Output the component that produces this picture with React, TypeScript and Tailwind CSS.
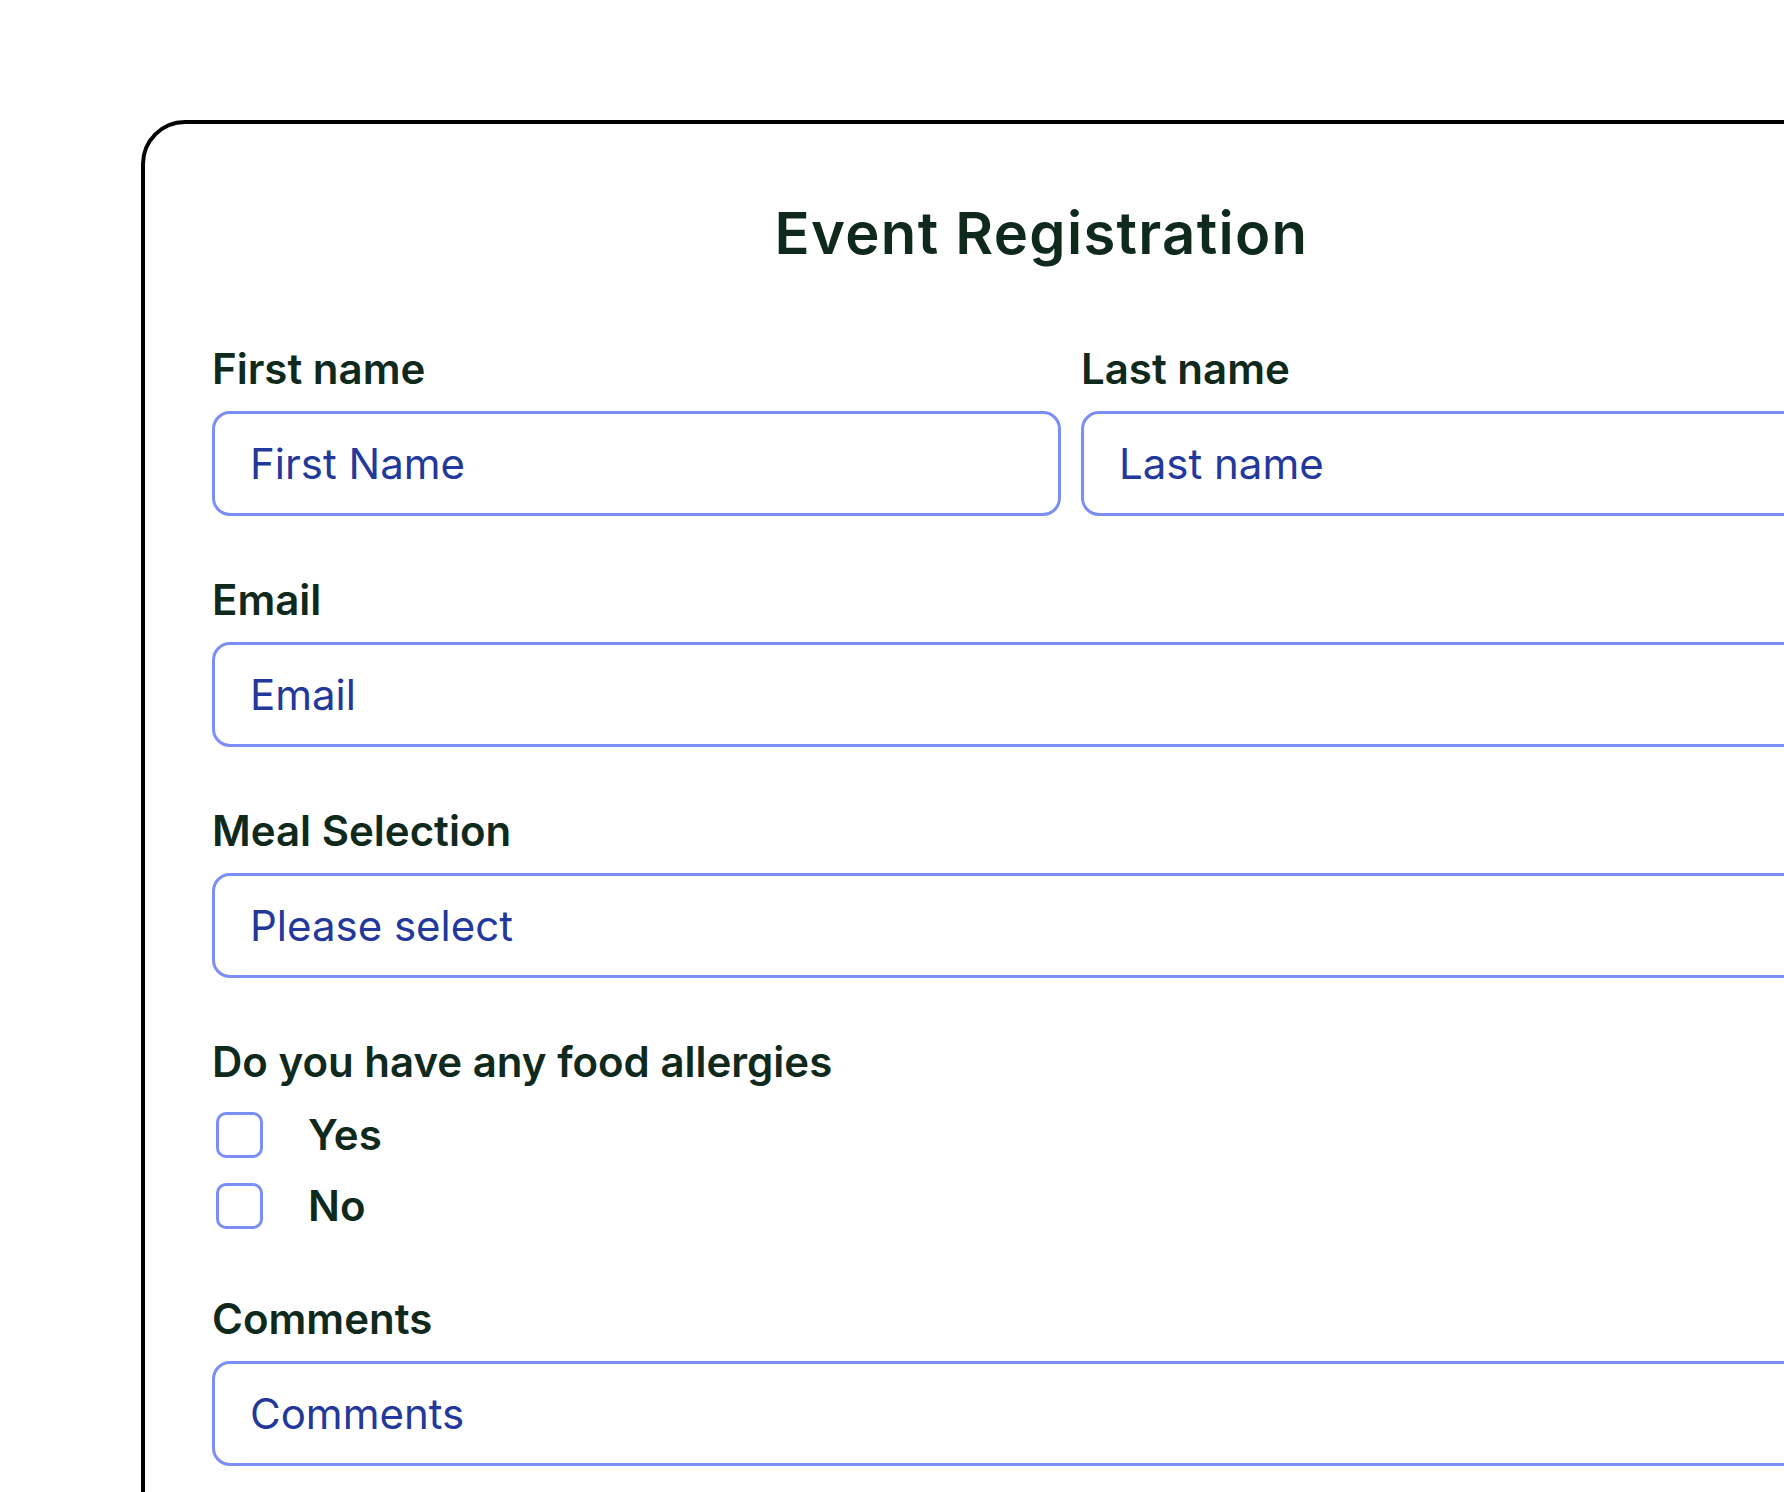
import React from "react";

const font = { fontFamily: "Inter, 'Noto Sans', sans-serif" };

function Field({ label, placeholder }: { label: string; placeholder: string }) {
  return (
    <div className="flex flex-col gap-[18px]">
      <div className="text-[42px] leading-[48px] font-semibold text-[#0f2a1d]">{label}</div>
      <div className="h-[105px] rounded-[18px] border-[3px] border-[#7b8ef7] flex items-center pl-[35px]">
        <span className="text-[42px] leading-[48px] font-normal text-[#23389b]">{placeholder}</span>
      </div>
    </div>
  );
}

function Check({ label }: { label: string }) {
  return (
    <div className="flex items-center h-[48px]">
      <div className="ml-[4px] w-[47px] h-[46px] rounded-[10px] border-[3px] border-[#7b8ef7]" />
      <span className="ml-[45px] text-[42px] leading-[48px] font-semibold text-[#0f2a1d]">{label}</span>
    </div>
  );
}

export default function App() {
  return (
    <div className="w-[1784px] h-[1492px] overflow-hidden bg-white" style={font}>
      <div className="ml-[141px] mt-[120px] w-[1801px] h-[1600px] rounded-tl-[44px] rounded-tr-[44px] border-[4px] border-black pt-[75px] px-[67px]">
        <div className="text-center text-[58px] leading-[68px] font-semibold tracking-[1.3px] text-[#0f2a1d]">
          Event Registration
        </div>
        <div className="mt-[78px] flex flex-col gap-[60px]">
          <div className="grid grid-cols-[849px_1fr] gap-[20px]">
            <Field label="First name" placeholder="First Name" />
            <Field label="Last name" placeholder="Last name" />
          </div>
          <Field label="Email" placeholder="Email" />
          <Field label="Meal Selection" placeholder="Please select" />
          <div className="flex flex-col">
            <div className="text-[42px] leading-[48px] font-semibold text-[#0f2a1d]">
              Do you have any food allergies
            </div>
            <div className="mt-[25px] flex flex-col gap-[23px]">
              <Check label="Yes" />
              <Check label="No" />
            </div>
          </div>
          <div className="mt-[5px]">
            <Field label="Comments" placeholder="Comments" />
          </div>
        </div>
      </div>
    </div>
  );
}
